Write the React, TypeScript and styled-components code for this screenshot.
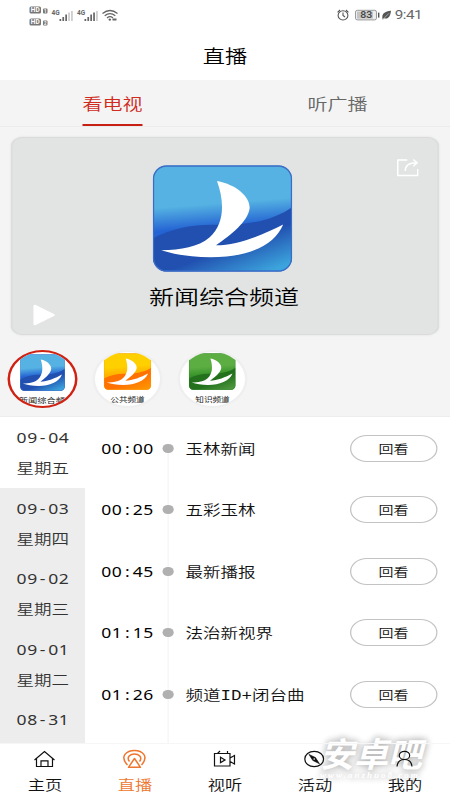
import React from 'react';
import styled, { createGlobalStyle } from 'styled-components';

const GlobalStyle = createGlobalStyle`
  * { box-sizing: border-box; }
  body { margin: 0; background: #fff; overflow: hidden; }
`;

const Viewport = styled.div`
  position: relative;
  width: 450px;
  height: 800px;
  overflow: hidden;
`;

const Screen = styled.main`
  display: flex;
  flex-direction: column;
  width: 360px;
  height: 800px;
  transform: scaleX(1.25);
  transform-origin: 0 0;
  font-family: 'Noto Sans CJK SC', sans-serif;
  font-weight: 350;
  color: #111;
`;

const StatusBar = styled.header`
  display: flex;
  justify-content: space-between;
  align-items: center;
  height: 31px;
  padding: 0 22.4px 0 22.4px;
`;

const StatusGroup = styled.div`
  display: flex;
  align-items: center;
  padding-bottom: 1px;
`;

const Clock = styled.span`
  font: 12.2px/16px Roboto, sans-serif;
  letter-spacing: -0.4px;
  color: #666;
  margin-left: 3px;
`;

const Art = styled.svg<{ $w: number; $h: number }>`
  display: block;
  flex: none;
  width: ${p => p.$w}px;
  height: ${p => p.$h}px;
`;

const TitleBar = styled.h1`
  margin: 0;
  height: 49px;
  text-align: center;
  font-size: 17.8px;
  font-weight: 350;
  line-height: 48px;
  color: #000;
`;

const Tabs = styled.nav`
  display: flex;
  height: 47px;
  background: #f4f4f4;
  border-bottom: 1px solid #ebebeb;
`;

const Tab = styled.div<{ $active?: boolean }>`
  flex: 1;
  display: flex;
  justify-content: center;
  font-size: 16px;
  line-height: 47px;
  color: ${p => (p.$active ? '#cf2a1c' : '#666')};
  span {
    height: 46px;
    border-bottom: ${p => (p.$active ? '2px solid #c62015' : '0')};
  }
`;

const Stage = styled.section`
  height: 290px;
  padding: 10px 9px 0;
  background: #f4f4f4;
  border-bottom: 1px solid #ececec;
`;

const Player = styled.div`
  position: relative;
  display: flex;
  flex-direction: column;
  align-items: center;
  width: 342px;
  height: 198px;
  padding: 27px 5px 0 0;
  border-radius: 9px;
  background: #e1e4e3;
  border: 1px solid #d9dbda;
  box-shadow: 0 0 2px #ddd;
`;

const PlayerName = styled.div`
  margin: 10px 0 0 3.6px;
  font-size: 20px;
  font-weight: 350;
  line-height: 29px;
  color: #000;
`;

const ShareButton = styled.div`
  position: absolute;
  right: 14.6px;
  top: 20px;
`;

const PlayButton = styled.div`
  position: absolute;
  left: 16.4px;
  bottom: 8px;
`;

const Channels = styled.div`
  display: flex;
  gap: 12px;
  margin: 15px 0 0 -3px;
`;

const Channel = styled.div<{ $active?: boolean }>`
  display: flex;
  flex-direction: column;
  align-items: center;
  width: 56px;
  height: 58px;
  overflow: hidden;
  padding-top: ${p => (p.$active ? 2 : 1)}px;
  border-radius: 50%;
  border: 2px solid ${p => (p.$active ? '#cf2213' : '#efefef')};
  background: #fff;
  color: #222;
  font-size: ${p => (p.$active ? 7.4 : 6.9)}px;
  font-weight: 400;
  line-height: 10px;
  white-space: nowrap;
  span {
    width: ${p => (p.$active ? '38px' : 'auto')};
    margin-top: 4px;
    overflow: hidden;
  }
`;

const Schedule = styled.section`
  display: flex;
  height: 327px;
  overflow: hidden;
  border-bottom: 1px solid #f6f6f6;
`;

const Days = styled.div`
  width: 68px;
  flex: none;
`;

const Day = styled.div<{ $active?: boolean }>`
  height: 70.5px;
  padding: 6px 0 0 13.3px;
  background: ${p => (p.$active ? '#fff' : '#ededed')};
  font-size: 14px;
  line-height: 28.6px;
  color: #333;
`;

const Digits = styled.div`
  font-family: 'Noto Sans', sans-serif;
  font-weight: 400;
  letter-spacing: 0.4px;
  line-height: 30px;
`;

const Separator = styled.span`
  display: inline-block;
  width: 8.4px;
  text-align: center;
`;

const Programs = styled.div`
  flex: 1;
`;

const Program = styled.div`
  display: flex;
  align-items: center;
  height: 61.5px;
  padding-left: 13px;
  font-size: 14px;
  ${Digits} {
    width: 49.4px;
    padding-top: 2px;
    color: #000;
  }
`;

const Track = styled.div<{ $first?: boolean }>`
  display: flex;
  align-items: flex-start;
  justify-content: center;
  align-self: flex-start;
  width: 8.4px;
  height: 61.5px;
  margin-top: 26.5px;
  background: linear-gradient(#f5f5f5, #f5f5f5) center / 1.4px 100% no-repeat;
  &::before {
    content: '';
    width: 8.4px;
    height: 9px;
    border-radius: 50%;
    background: #b0b0b0;
  }
`;

const ProgramName = styled.div`
  flex: 1;
  padding: 0 0 0 9.6px;
  white-space: nowrap;
  b {
    font: 400 14px 'Liberation Mono', monospace;
  }
`;

const Replay = styled.button`
  width: 70px;
  height: 27px;
  margin: 1px 10.2px 0 0;
  padding: 1px 0 0;
  border: 1px solid #c3c3c3;
  border-radius: 14px;
  background: #fff;
  font: 350 12px/20px 'Noto Sans CJK SC', sans-serif;
  color: #111;
`;

const BottomNav = styled.nav`
  display: flex;
  height: 56px;
`;

const NavItem = styled.div<{ $active?: boolean }>`
  flex: 1;
  display: flex;
  flex-direction: column;
  align-items: center;
  padding-top: 5px;
  font-size: 13.8px;
  line-height: 20px;
  color: ${p => (p.$active ? '#ee762e' : '#111')};
  svg { margin-bottom: 5px; }
`;

const Watermark = styled.div`
  position: absolute;
  left: 320px;
  top: 735px;
  width: 108px;
  color: #fff;
  text-shadow: 0 0 6px #b4b4b4, 0 0 9px #c4c4c4;
`;

const WatermarkName = styled.div`
  font: italic 700 34px/36px 'Noto Sans CJK SC', sans-serif;
  white-space: nowrap;
`;

const WatermarkUrl = styled.div`
  font: italic bold 9px/9px 'Liberation Serif', serif;
  letter-spacing: 2px;
  white-space: nowrap;
`;

type Palette = { light: string; mid: string; deep: string; glow: string; edge: string };

const palettes: Record<string, Palette> = {
  blue: { light: '#55b2e2', mid: '#2463d3', deep: '#2150b0', glow: '#3ca4dc', edge: '#3b6cc6' },
  orange: { light: '#ffd000', mid: '#ffb000', deep: '#ff7200', glow: '#ff9400', edge: '#f39a16' },
  green: { light: '#5cae43', mid: '#379329', deep: '#23701d', glow: '#4c963d', edge: '#398233' },
};

function SailLogo({ tone, w, h }: { tone: string; w: number; h: number }) {
  const c = palettes[tone];
  const id = `${tone}${Math.round(w)}`;
  return (
    <Art $w={w} $h={h} viewBox="66 44 421 320" preserveAspectRatio="none">
      <defs>
        <linearGradient id={`${id}sky`} x1="0.42" y1="0" x2="0.52" y2="1">
          <stop offset="0" stopColor={c.light} />
          <stop offset=".36" stopColor={c.light} />
          <stop offset=".58" stopColor={c.mid} />
        </linearGradient>
        <linearGradient id={`${id}sea`} x1="0.5" y1="0.3" x2="1" y2="0.9">
          <stop offset=".35" stopColor={c.deep} />
          <stop offset=".95" stopColor={c.glow} />
        </linearGradient>
        <clipPath id={`${id}clip`}><rect x="68" y="46" width="417" height="316" rx="40" /></clipPath>
      </defs>
      <g clipPath={`url(#${id}clip)`}>
        <rect x="66" y="44" width="421" height="320" fill={`url(#${id}sky)`} />
        <path d="M66 264C125 233 190 220 270 223C360 225 438 205 487 169V364H66Z" fill={`url(#${id}sea)`} />
      </g>
      <rect x="69" y="47" width="415" height="314" rx="39" fill="none" stroke={c.edge} strokeWidth="4" />
      <path d="M260 92C321 103 361 142 358 174C352 214 303 252 257 284C323 284 397 253 459 222C431 290 343 320 240 320C180 319 133 312 92 299C153 297 203 290 238 260C281 222 284 158 260 92Z" fill="#fff" />
    </Art>
  );
}

function SignalIcons() {
  const bars = (x: number, faded: number) =>
    [2, 4, 6.5, 8.5, 10].map((h, i) => (
      <rect key={i} x={x + i * 2.9} y={20.5 - h} width="1.7" height={h} fill={i >= faded ? '#ccc' : '#666'} />
    ));
  return (
    <Art $w={73.6} $h={24} viewBox="28 3.500 92 24" preserveAspectRatio="none" fontFamily="Roboto" fontWeight="700" fill="#666">
      {[6, 18].map((y, i) => (
        <g key={y}>
          <rect x="30" y={y} width="11.5" height="7" rx="1.5" fill="#777" />
          <text x="31.2" y={y + 5.9} fontSize="6.5" fill="#fff" textLength="9">HD</text>
          <rect x="43.5" y={y + 2} width="4.5" height="5" rx="1" fill="#777" />
          <text x="44.6" y={y + 6.3} fontSize="4.5" fill="#fff">{i + 1}</text>
        </g>
      ))}
      <text x="52" y="14.5" fontSize="6.5">4G</text>
      {bars(60, 3)}
      <text x="77.5" y="14.5" fontSize="6.5">4G</text>
      {bars(85, 4)}
      <g fill="none" stroke="#666" strokeWidth="1.3">
        <path d="M103 13Q110.5 7 118 13M105.2 15.3Q110.5 11 115.8 15.3M107.5 17.4Q110.5 15 113.5 17.4" />
      </g>
      <circle cx="110.3" cy="19.1" r="1.2" />
      <path d="M113 18h4v2h-4z" />
    </Art>
  );
}

function BatteryIcons() {
  return (
    <Art $w={44.8} $h={14} viewBox="335 8 56 14" preserveAspectRatio="none">
      <g fill="none" stroke="#555" strokeWidth="1.1">
        <ellipse cx="343" cy="15.4" rx="4.9" ry="4.6" />
        <path d="M343 12.6V15.4L345 17M337.6 12.3L340 10M348.4 12.3L346 10" />
      </g>
      <rect x="355.5" y="10.3" width="21" height="9.6" rx="1.8" fill="#eee" stroke="#999" />
      <rect x="357" y="11.6" width="16" height="7" fill="#c4c4c4" />
      <rect x="378" y="12.6" width="1.4" height="5" fill="#555" />
      <text x="360.3" y="18.2" fontFamily="Roboto" fontWeight="500" fontSize="8.5" fill="#444" textLength="12" lengthAdjust="spacingAndGlyphs">83</text>
      <path d="M382.5 18.8C381.5 13.5 385 11.5 391 10.8C390.5 16.5 388 19.7 384 18.2L382.8 19.7Z" fill="#555" />
      <path d="M383 19.3L389 13.3" stroke="#ddd" strokeWidth=".6" />
    </Art>
  );
}

const navIcons: Record<string, React.ReactNode> = {
  主页: <path d="M35 760L45 751.5L55 760M37 758.5V766.5H53V758.5M41.5 766.5V760.8H48.5V766.5" />,
  直播: (
    <g strokeWidth="1.5">
      <path d="M128 765C119.5 756 127.5 750.4 135 750.4S150 756 142 765" />
      <path d="M130 761.5C126.5 757 131 754 135 754S143.500 757 140 761.5M135 758.5L129 767.300H141Z" strokeLinejoin="round" />
    </g>
  ),
  视听: (
    <>
      <path d="M215 753.5H230.500V766H215ZM230.500 758L235 755.5V764L230.500 761.5M218 753.5L220.500 751M228 753.5V751" />
      <path d="M221 757.2L225.500 760L221 762.600Z" />
    </>
  ),
  活动: (
    <>
      <ellipse cx="314.700" cy="759" rx="9.400" ry="7.700" />
      <path d="M309.500 754.400L316 757.600L320 763.800L313.300 760.400Z" fill="currentColor" strokeWidth=".6" />
      <circle cx="314.700" cy="759" r=".8" fill="#fff" stroke="none" />
    </>
  ),
  我的: (
    <>
      <ellipse cx="405" cy="755.400" rx="5.200" ry="4.100" />
      <path d="M397.500 766.500C398 761.500 401 759.500 405 759.500S412 761.500 412.500 766.500" />
    </>
  ),
};

const navLabels = ['主页', '直播', '视听', '活动', '我的'];

const days = [
  ['09', '04', '星期五'],
  ['09', '03', '星期四'],
  ['09', '02', '星期三'],
  ['09', '01', '星期二'],
  ['08', '31', ''],
];

const programs: [string, string, React.ReactNode][] = [
  ['00', '00', '玉林新闻'],
  ['00', '25', '五彩玉林'],
  ['00', '45', '最新播报'],
  ['01', '15', '法治新视界'],
  ['01', '26', <>频道<b>ID+</b>闭台曲</>],
];

export default function App() {
  return (
    <Viewport>
      <GlobalStyle />
      <Watermark>
        <WatermarkName>安卓吧</WatermarkName>
        <WatermarkUrl>www.anzhuo8.com</WatermarkUrl>
      </Watermark>
      <Screen>
        <StatusBar>
          <SignalIcons />
          <StatusGroup>
            <BatteryIcons />
            <Clock>9:41</Clock>
          </StatusGroup>
        </StatusBar>
        <TitleBar>直播</TitleBar>
        <Tabs>
          <Tab $active><span>看电视</span></Tab>
          <Tab><span>听广播</span></Tab>
        </Tabs>
        <Stage>
          <Player>
            <SailLogo tone="blue" w={112} h={107} />
            <PlayerName>新闻综合频道</PlayerName>
            <ShareButton>
              <Art $w={18.4} $h={19} viewBox="0 0 23 19" preserveAspectRatio="none" fill="none" stroke="#fff" strokeWidth="1.5">
                <path d="M11 2H1.500V17.500H21.500V11M9 13C9 7.500 12 4.800 20.500 4.800M17 1.500L21 4.800L17 8.200" strokeLinejoin="round" />
              </Art>
            </ShareButton>
            <PlayButton>
              <Art $w={18} $h={22} viewBox="0 0 18 22">
                <path d="M2 2L16.500 11L2 20Z" fill="#fff" stroke="#fff" strokeWidth="2.500" strokeLinejoin="round" />
              </Art>
            </PlayButton>
          </Player>
          <Channels>
            <Channel $active><SailLogo tone="blue" w={36} h={37} /><span>新闻综合频道</span></Channel>
            <Channel><SailLogo tone="orange" w={38} h={37} /><span>公共频道</span></Channel>
            <Channel><SailLogo tone="green" w={37.5} h={37} /><span>知识频道</span></Channel>
          </Channels>
        </Stage>
        <Schedule>
          <Days>
            {days.map(([month, date, weekday], i) => (
              <Day key={date} $active={i === 0}>
                <Digits>{month}<Separator>-</Separator>{date}</Digits>
                {weekday}
              </Day>
            ))}
          </Days>
          <Programs>
            {programs.map(([hour, minute, name]) => (
              <Program key={hour + minute}>
                <Digits>{hour}<Separator>:</Separator>{minute}</Digits>
                <Track />
                <ProgramName>{name}</ProgramName>
                <Replay>回看</Replay>
              </Program>
            ))}
          </Programs>
        </Schedule>
        <BottomNav>
          {navLabels.map((label, i) => (
            <NavItem key={label} $active={label === '直播'}>
              <Art $w={19.2} $h={20} viewBox={`${33 + i * 90} 749 24 20`} preserveAspectRatio="none" fill="none" stroke="currentColor" strokeWidth="1.2">
                {navIcons[label]}
              </Art>
              {label}
            </NavItem>
          ))}
        </BottomNav>
      </Screen>
    </Viewport>
  );
}
